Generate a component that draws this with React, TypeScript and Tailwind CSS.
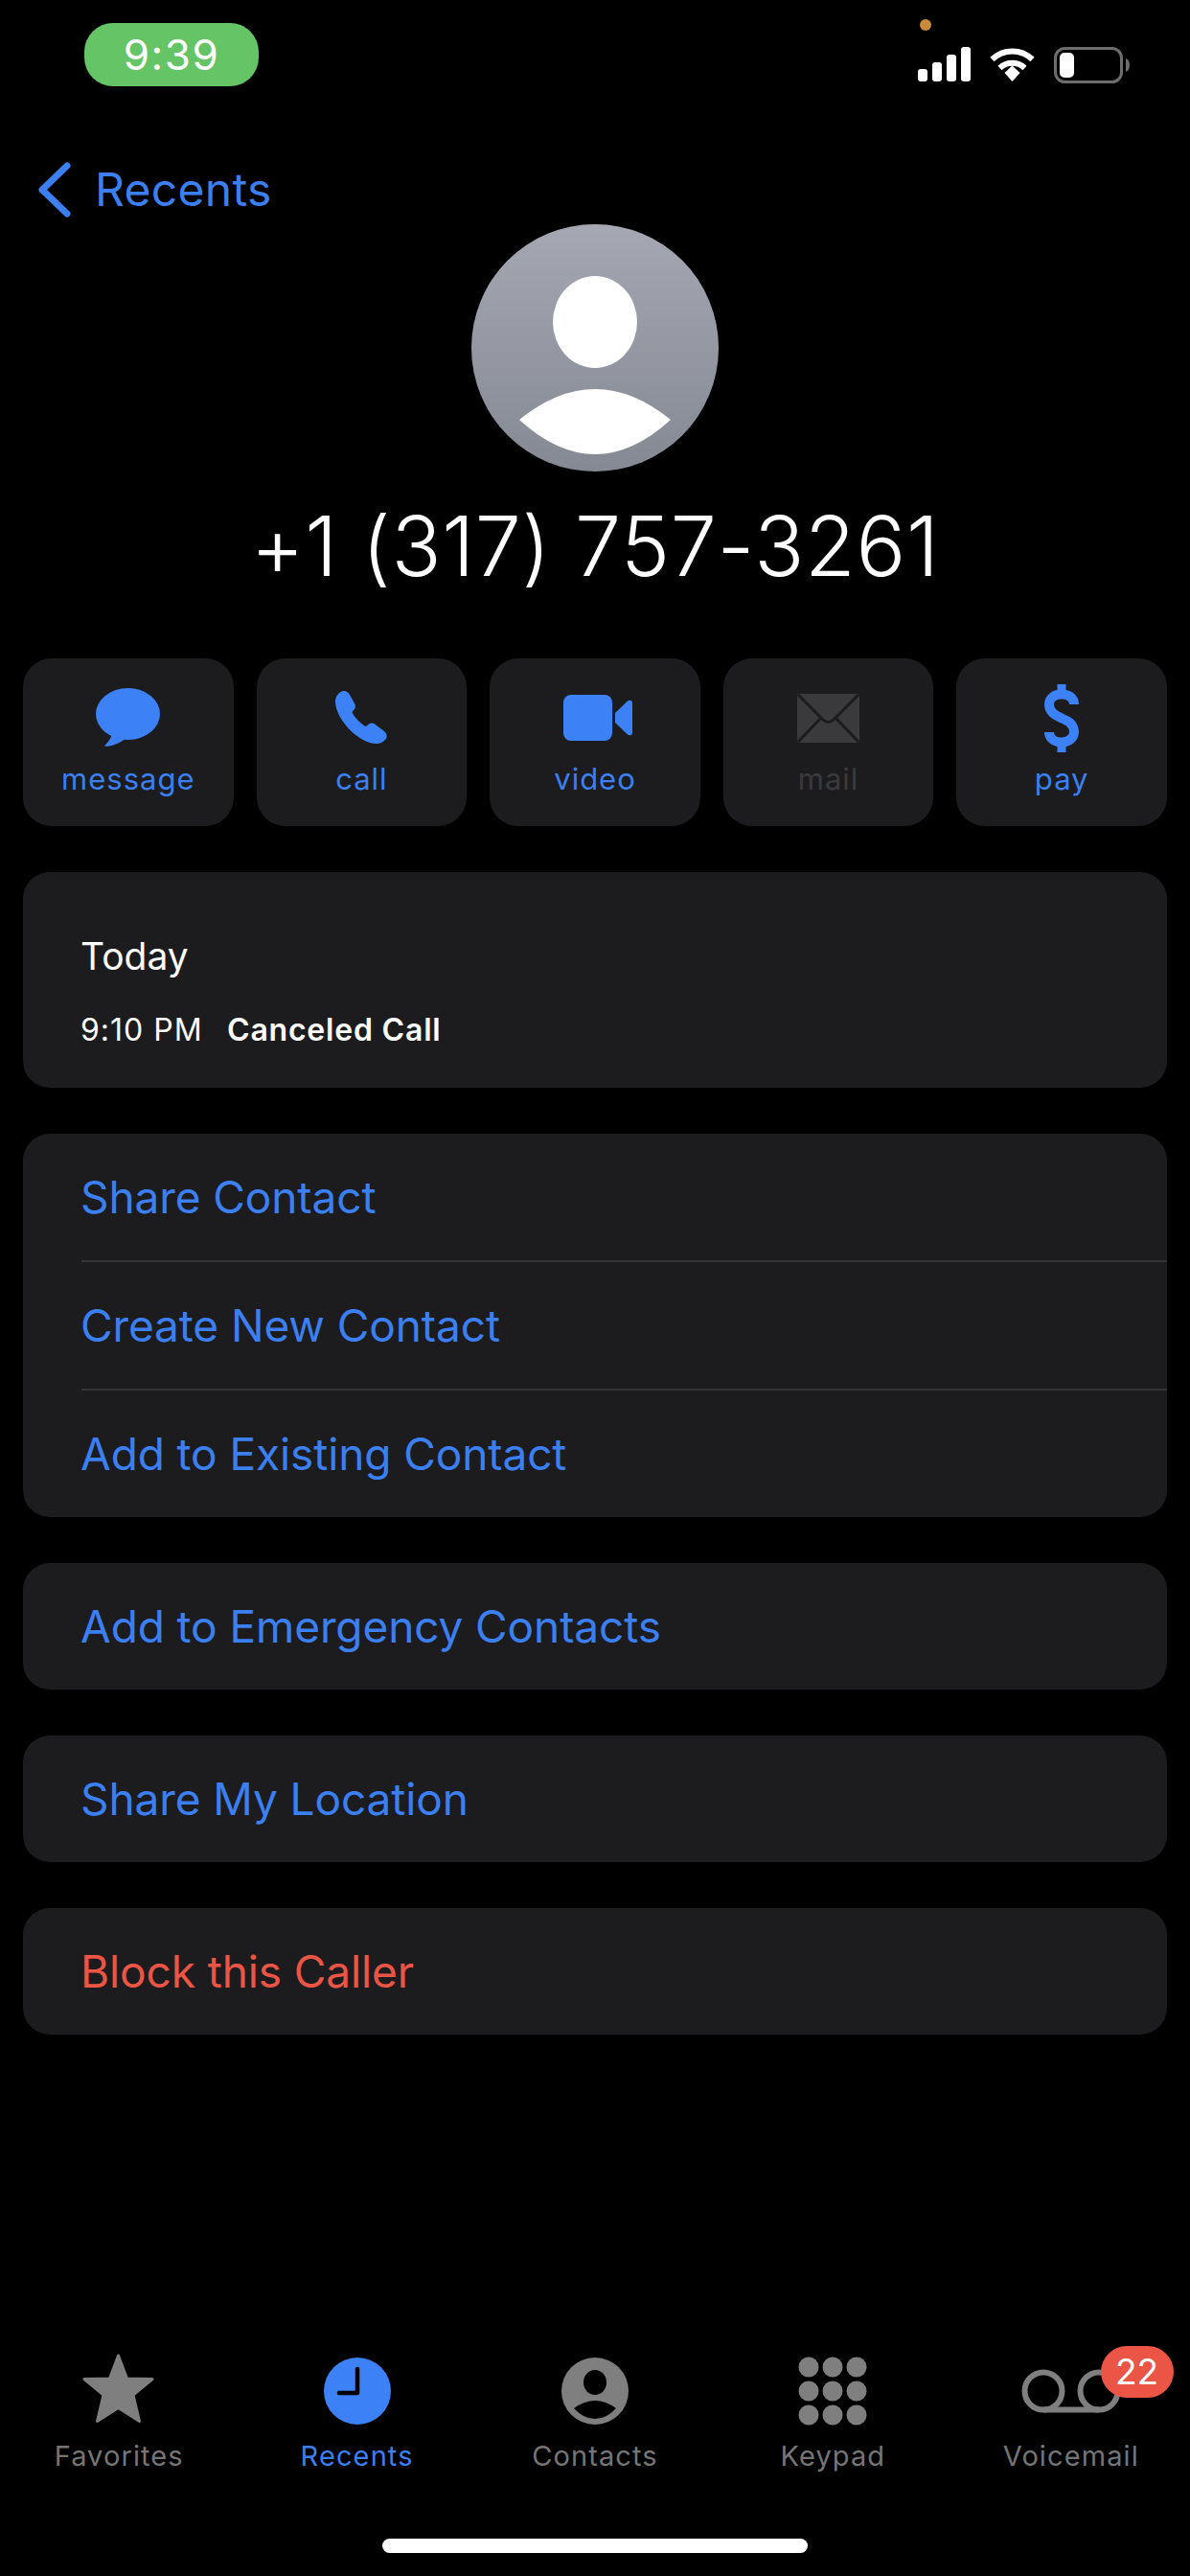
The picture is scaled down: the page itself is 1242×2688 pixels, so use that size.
import React from 'react';

const font = { fontFamily: 'Inter, "Noto Sans", sans-serif' };

const MessageIcon = () => (
  <svg width="67" height="62" viewBox="0 0 67 62" className="fill-[#3c82f6]">
    <ellipse cx="33.5" cy="27" rx="33.5" ry="27" />
    <path d="M17 46 C17 50 14 56 9 60 C11 62 21 60 31 53 Z" />
  </svg>
);

const CallIcon = () => (
  <svg width="55" height="56" viewBox="0 0 55 56" className="fill-[#3c82f6]">
    <path d="M8 0 C11 -0.5 13 1 15 4 L20 13 C21.5 16 21 18 19 20 L17.5 22 C18.5 26 28 36 32 37 L34.5 35 C37 33 39 33 41 34.5 L51 42 C54 44.5 54.5 48 52.5 50.5 C50 53 47 55 43 55 C24 55 0 29 0 11 C0 6 3 1.5 8 0 Z" />
  </svg>
);

const VideoIcon = () => (
  <svg width="72" height="48" viewBox="0 0 72 48" className="fill-[#3c82f6] ml-[7px]">
    <rect x="0" y="0" width="51" height="48" rx="8" />
    <path d="M54 19 L67 6.5 C69 5 72 5.5 72 8.5 L72 39.5 C72 42.5 69 43 67 41.5 L54 29 Z" />
  </svg>
);

const MailIcon = () => (
  <svg width="65" height="51" viewBox="0 0 65 51">
    <rect width="65" height="51" rx="2" fill="#3a3a3c" />
    <path d="M1 1 L27 27 Q32.5 32 38 27 L64 1 M1 50 L25 25 M64 50 L40 25" stroke="#1c1c1e" strokeWidth="3" fill="none" />
  </svg>
);

const PayIcon = () => (
  <svg width="36" height="71" viewBox="0 0 36 71" fill="none" stroke="#3c82f6">
    <path d="M18 0 V11 M18 60 V71" strokeWidth="9" />
    <path d="M31 21 C31 14 25 10.500 18 10.500 C10 10.500 5 15 5 21 C5 30 13 33 18 35.500 C24 38 31 41 31 50 C31 56 25 60.500 18 60.500 C10 60.500 5 56 5 50" strokeWidth="10" />
  </svg>
);

const actions = [
  { label: 'message', icon: <MessageIcon />, muted: false },
  { label: 'call', icon: <CallIcon />, muted: false },
  { label: 'video', icon: <VideoIcon />, muted: false },
  { label: 'mail', icon: <MailIcon />, muted: true },
  { label: 'pay', icon: <PayIcon />, muted: false },
];

const StarTab = () => (
  <svg width="80" height="80" viewBox="0 0 80 80" fill="#7f7f7f" stroke="#7f7f7f" strokeWidth="3" strokeLinejoin="round">
    <path d="M39.500 3 L48.500 27 L75 27.500 L55 44 L61.500 71.500 L39.500 57.500 L17.500 71.500 L24 44 L4 27.500 L30.500 27 Z" />
  </svg>
);

const ClockTab = () => (
  <svg width="80" height="80" viewBox="0 0 80 80">
    <circle cx="40" cy="40" r="35" fill="#3c82f6" />
    <path d="M40 17 V42 H21" fill="none" stroke="#000" strokeWidth="4.500" strokeLinecap="round" strokeLinejoin="round" />
  </svg>
);

const ContactTab = () => (
  <svg width="80" height="80" viewBox="0 0 80 80">
    <circle cx="40" cy="40" r="35" fill="#7f7f7f" />
    <ellipse cx="40" cy="31" rx="12" ry="13" fill="#000" />
    <path d="M18 58 Q40 42 62 58 Q52 69 40 69 Q28 69 18 58 Z" fill="#000" />
  </svg>
);

const KeypadTab = () => (
  <svg width="80" height="80" viewBox="0 0 80 80" fill="#7f7f7f">
    {[15, 40, 65].map((cy) =>
      [15, 40, 65].map((cx) => <circle key={`${cx}-${cy}`} cx={cx} cy={cy} r="10.500" />)
    )}
  </svg>
);

const VoicemailTab = () => (
  <svg width="110" height="80" viewBox="0 0 110 80" fill="none" stroke="#7f7f7f" strokeWidth="6">
    <circle cx="26" cy="40" r="19.500" />
    <circle cx="84" cy="40" r="19.500" />
    <path d="M26 59.500 H84" />
  </svg>
);

const tabs = [
  { label: 'Favorites', icon: <StarTab />, active: false },
  { label: 'Recents', icon: <ClockTab />, active: true },
  { label: 'Contacts', icon: <ContactTab />, active: false },
  { label: 'Keypad', icon: <KeypadTab />, active: false },
  { label: 'Voicemail', icon: <VoicemailTab />, active: false },
];

const Row: React.FC<{ label: string; red?: boolean }> = ({ label, red }) => (
  <div className={`h-[132px] flex items-center pl-[60px] text-[46px] tracking-[-0.1px] ${red ? 'text-[#eb5545]' : 'text-[#3b7ff0]'}`}>
    {label}
  </div>
);

const Divider = () => <div className="ml-[61px] h-[2px] bg-[#343436]" />;

const App: React.FC = () => {
  return (
    <div className="w-[1242px] h-[2688px] bg-black text-white flex flex-col overflow-hidden" style={font}>
      {/* status bar */}
      <div className="relative flex justify-between pt-[24px] pl-[88px] pr-[63px] h-[144px]">
        <div className="w-[182px] h-[66px] rounded-[30px] bg-[#65c466] flex items-center justify-center text-[44px] tracking-[1.500px]">
          9:39
        </div>
        <div className="flex items-start gap-[20px] pt-[25px]">
          <svg width="55" height="36" viewBox="0 0 55 36" fill="#fff">
            <rect x="0" y="23" width="10" height="13" rx="3" />
            <rect x="15" y="16" width="10" height="20" rx="3" />
            <rect x="30" y="8" width="10" height="28" rx="3" />
            <rect x="45" y="0" width="10" height="36" rx="3" />
          </svg>
          <svg width="47" height="36" viewBox="0 0 47 36" fill="none" stroke="#fff" strokeWidth="6">
            <path d="M2.500 13 A30 30 0 0 1 44.500 13" />
            <path d="M10.500 22 A19 19 0 0 1 36.500 22" />
            <path d="M15.500 27 L23.500 19.500 L31.500 27 L23.500 36 Z" fill="#fff" stroke="none" />
          </svg>
          <svg width="79" height="38" viewBox="0 0 79 38">
            <rect x="1.500" y="1.500" width="69" height="35" rx="10" fill="none" stroke="#6d6d6d" strokeWidth="3" />
            <rect x="6" y="6" width="15" height="26" rx="5" fill="#fff" />
            <path d="M75 12 C78 13 79 16 79 19 C79 22 78 25 75 26 Z" fill="#6d6d6d" />
          </svg>
        </div>
        <div className="absolute left-[960px] top-[20px] w-[12px] h-[12px] rounded-full bg-[#c98a3a]" />
      </div>

      {/* back link */}
      <div className="flex items-center h-[60px] mt-[24px] pl-[40px] text-[#3b7ff0] text-[48px] tracking-[0.3px]">
        <svg width="34" height="58" viewBox="0 0 34 58" fill="none" stroke="#3b7ff0" strokeWidth="7" strokeLinecap="round" strokeLinejoin="round">
          <path d="M30 4 L4 29 L30 54" />
        </svg>
        <span className="ml-[25px]">Recents</span>
      </div>

      {/* header */}
      <div className="flex flex-col items-center">
        <div className="w-[258px] h-[258px] mt-[6px] rounded-full bg-linear-to-b from-[#a5a8b3] to-[#858993]">
          <svg width="258" height="258" viewBox="0 0 258 258" fill="#fff">
            <ellipse cx="129" cy="102" rx="44" ry="48" />
            <path d="M50 204 Q129 140 208 204 Q129 276 50 204 Z" />
          </svg>
        </div>
        <div className="h-[100px] mt-[28px] leading-[100px] text-[86px] font-light tracking-[0.7px]">
          +1 (317) 757-3261
        </div>
      </div>

      {/* quick actions */}
      <div className="grid grid-cols-5 gap-[24px] px-[24px] mt-[67px]">
        {actions.map((a) => (
          <div key={a.label} className="h-[175px] rounded-[30px] bg-[#1c1c1e] flex flex-col items-center">
            <div className="h-[108px] flex items-center justify-center pt-[16px]">{a.icon}</div>
            <div className={`text-[31px] leading-[40px] mt-[-2px] tracking-[1px] ${a.muted ? 'text-[#3a3a3c]' : 'text-[#3b7ff0]'}`}>{a.label}</div>
          </div>
        ))}
      </div>

      {/* call history + actions */}
      <div className="flex flex-col gap-[48px] px-[24px] mt-[48px]">
        <div className="h-[225px] rounded-[28px] bg-[#1c1c1e] pl-[60px] pt-[64px]">
          <div className="text-[39px] leading-[48px] tracking-[0px]">Today</div>
          <div className="flex text-[32px] leading-[40px] mt-[33px]">
            <span className="w-[153px] tracking-[1px]">9:10 PM</span>
            <span className="font-semibold tracking-[0.8px]">Canceled Call</span>
          </div>
        </div>

        <div className="rounded-[28px] bg-[#1c1c1e]">
          <Row label="Share Contact" />
          <Divider />
          <Row label="Create New Contact" />
          <Divider />
          <Row label="Add to Existing Contact" />
        </div>

        <div className="rounded-[28px] bg-[#1c1c1e]">
          <Row label="Add to Emergency Contacts" />
        </div>
        <div className="rounded-[28px] bg-[#1c1c1e]">
          <Row label="Share My Location" />
        </div>
        <div className="rounded-[28px] bg-[#1c1c1e]">
          <Row label="Block this Caller" red />
        </div>
      </div>

      {/* tab bar */}
      <div className="mt-auto grid grid-cols-5">
        {tabs.map((t) => (
          <div key={t.label} className="relative flex flex-col items-center">
            {t.icon}
            <div className={`text-[29px] leading-[36px] mt-[10px] tracking-[1.100px] ${t.active ? 'text-[#3b7ff0]' : 'text-[#757575]'}`}>{t.label}</div>
            {t.label === 'Voicemail' && (
              <div className="absolute left-[155px] top-[-7px] w-[76px] h-[54px] rounded-[27px] bg-[#eb5545] text-white text-[37px] flex items-center justify-center">
                22
              </div>
            )}
          </div>
        ))}
      </div>
      <div className="h-[107px] flex justify-center pt-[68px] shrink-0">
        <div className="w-[444px] h-[15px] rounded-full bg-white" />
      </div>
    </div>
  );
};

export default App;
